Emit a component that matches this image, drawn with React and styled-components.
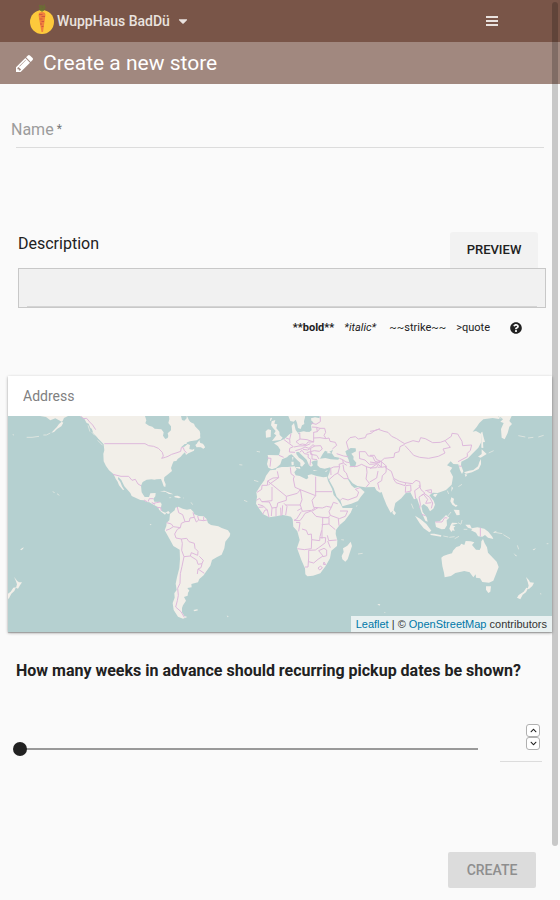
import React, { useState } from 'react';
import styled, { createGlobalStyle } from 'styled-components';
import { FaCaretDown, FaQuestionCircle, FaChevronUp, FaChevronDown } from 'react-icons/fa';

const GlobalStyle = createGlobalStyle`
  *, *::before, *::after { box-sizing: border-box; }
  body {
    margin: 0;
    background: #fafafa;
    color: #212121;
    font: 400 16px/24px Roboto, sans-serif;
  }
  button, input, textarea { font: inherit; color: inherit; }
`;

const TopBar = styled.header`
  display: flex;
  align-items: center;
  justify-content: space-between;
  height: 42px;
  padding: 0 62px 0 30px;
  background: #795548;
  color: #e9e2df;
`;

const BarButton = styled.button`
  display: flex;
  align-items: center;
  padding: 0;
  border: 0;
  background: none;
  font-size: 14px;
  font-weight: 500;
  line-height: 20px;
  cursor: pointer;
`;

const GroupName = styled.span`
  margin: 0 6px 0 3px;
`;

const Logo = styled.svg`
  display: block;
  width: 24px;
  height: 34px;
`;

const TitleBar = styled.div`
  display: flex;
  align-items: center;
  gap: 10px;
  height: 42px;
  padding: 0 16px;
  background: #a1887f;
  color: #fff;
`;

const Title = styled.h1`
  margin: 0;
  font-size: 21px;
  font-weight: 400;
  line-height: 24px;
`;

const Form = styled.form`
  display: flex;
  flex-direction: column;
  padding: 34px 8px 12px;
`;

const NameField = styled.div`
  display: grid;
  margin-bottom: 84px;
`;

const NameLabel = styled.label`
  grid-area: 1 / 1;
  padding: 0 3px;
  color: #9c9c9c;
  pointer-events: none;

  sup {
    margin-left: 3px;
    color: #777;
    font-size: 12px;
    line-height: 12px;
    vertical-align: 2px;
  }
`;

const NameInput = styled.input`
  grid-area: 1 / 1;
  height: 30px;
  margin: 0 8px;
  padding: 0;
  border: 0;
  border-bottom: 1px solid #dcdcdc;
  background: none;
  outline: none;
`;

const DescriptionField = styled.div`
  margin: 0 6px 32px 10px;
`;

const DescriptionHead = styled.div`
  display: flex;
  justify-content: space-between;
  padding-right: 8px;
`;

const PreviewButton = styled.button`
  height: 36px;
  width: 88px;
  padding: 0;
  border: 0;
  border-radius: 3px 3px 0 0;
  background: #f2f2f2;
  font-size: 13px;
  font-weight: 500;
  cursor: pointer;
`;

const EditorBox = styled.div`
  height: 40px;
  padding: 0 8px;
  border: 1px solid #c8c8c8;
  background: #f1f1f1;
`;

const Editor = styled.textarea`
  display: block;
  width: 100%;
  height: 38px;
  padding: 8px 0;
  border: 0;
  border-bottom: 1px solid #d4d4d4;
  background: none;
  outline: none;
  resize: none;
`;

const Hints = styled.div`
  display: flex;
  justify-content: flex-end;
  align-items: center;
  gap: 10px;
  height: 32px;
  margin-top: 4px;
  padding-right: 24px;
  font-size: 11px;
  line-height: 16px;

  i { min-width: 35px; }
`;

const HelpLink = styled.a`
  display: flex;
  margin-left: 10px;
  color: #212121;
`;

const AddressCard = styled.section`
  background: #fff;
  box-shadow: 0 1px 3px rgba(0, 0, 0, 0.3), 0 1px 1px rgba(0, 0, 0, 0.2);
`;

const AddressInput = styled.input`
  display: block;
  width: 100%;
  height: 40px;
  padding: 0 15px;
  border: 0;
  background: none;
  font-size: 14px;
  outline: none;

  &::placeholder { color: #808080; opacity: 1; }
`;

const MapFrame = styled.div`
  position: relative;
  background: #b5d0d0;
`;

const MapArt = styled.svg`
  display: block;
  width: 100%;
  height: 216px;

  .land { fill: #f2efe9; }
  .isles { fill: none; stroke: #dce4df; stroke-width: 3; }
  .sea { fill: #b5d0d0; }
  .border { fill: none; stroke: #deb9dc; stroke-width: 3; stroke-linejoin: round; }
`;

const Attribution = styled.div`
  position: absolute;
  right: 0;
  bottom: 0;
  padding: 0 5px;
  background: rgba(255, 255, 255, 0.7);
  color: #333;
  font: 11px/16px "Liberation Sans", Arial, sans-serif;

  a { color: #0078a8; text-decoration: none; }
`;

const WeeksField = styled.fieldset`
  min-width: 0;
  margin: 27px 0 90px;
  padding: 0;
  border: 0;
`;

const WeeksLegend = styled.legend`
  padding: 0 8px;
  font-weight: 700;
`;

const WeeksRow = styled.div`
  display: flex;
  justify-content: space-between;
  align-items: flex-start;
  gap: 15px;
  padding: 39px 10px 0 5px;
`;

const Slider = styled.input`
  flex: 1;
  min-width: 0;
  height: 14px;
  margin: 20px 0 0;
  appearance: none;
  background: linear-gradient(#999, #999) 7px center / calc(100% - 14px) 2px no-repeat;

  &::-webkit-slider-thumb {
    appearance: none;
    width: 14px;
    height: 14px;
    border-radius: 50%;
    background: #212121;
  }
`;

const NumberBox = styled.div`
  display: flex;
  width: 42px;
  height: 40px;
  padding-right: 2px;
  border-bottom: 1px solid #dcdcdc;
`;

const NumberInput = styled.input`
  flex: 1;
  min-width: 0;
  height: 32px;
  padding: 0;
  border: 0;
  background: none;
  outline: none;
`;

const Stepper = styled.div`
  display: flex;
  flex-direction: column;
  margin-top: 2px;
`;

const StepButton = styled.button`
  display: flex;
  align-items: center;
  justify-content: center;
  width: 14px;
  height: 13px;
  padding: 0;
  border: 1px solid #b0b0b0;
  border-radius: 3px;
  background: #fff;
`;

const CreateButton = styled.button`
  align-self: flex-end;
  width: 88px;
  height: 36px;
  margin-right: 16px;
  padding: 0;
  border: 0;
  border-radius: 2px;
  background: #dcdcdc;
  color: #8e8e8e;
  font-size: 14px;
  font-weight: 500;
`;

const ScrollThumb = styled.div`
  position: fixed;
  top: 2px;
  right: 2px;
  width: 6px;
  height: calc(100vh - 56px);
  border-radius: 3px;
  background: rgba(0, 0, 0, 0.2);
  pointer-events: none;
`;

function CarrotLogo() {
  return (
    <Logo viewBox="0 0 24 34" aria-hidden="true">
      <circle cx="12" cy="18" r="12" fill="#fdc93c" />
      <path d="M12 8V1M11.500 7L9.500 1M12.500 7L14.500 0.500M11 7L9 4M13 7L15.500 3.500M9 2h3M12.500 3h3M10 5h4" stroke="#66752f" strokeWidth="0.9" fill="none" />
      <path d="M9 9q3-2 6 0q1 2 0 5l-2 14h-1.500L9 14q-1-3 0-5Z" fill="#f0803c" />
      <path d="M9 10.500h3.500M11.500 12.500h3.500M9.500 15h3M11.500 17.500h2.500M10 20h2M11.500 22.500h2" stroke="#cc5340" strokeWidth="0.9" />
    </Logo>
  );
}

function PencilIcon() {
  return (
    <svg width="17" height="17" viewBox="128 149 1515 1515" fill="currentColor" aria-hidden="true">
      <path d="M491 1536l91-91-235-235-91 91v107h128v128h107zm523-928q0-22-22-22-10 0-17 7l-542 542q-7 7-7 17 0 22 22 22 10 0 17-7l542-542q7-7 7-17zm-54-192l416 416-832 832h-416v-416zm683 96q0 53-37 90l-166 166-416-416 166-165q36-38 90-38 53 0 91 38l235 234q37 39 37 91z" />
    </svg>
  );
}

function MenuIcon() {
  return (
    <svg width="12" height="10" viewBox="0 0 12 10" fill="currentColor" aria-hidden="true">
      <path d="M0 0h12v2H0zM0 4h12v2H0zM0 8h12v2H0z" />
    </svg>
  );
}

function WorldMap() {
  return (
    <MapArt viewBox="0 0 1632 648" preserveAspectRatio="xMidYMid slice" role="img" aria-label="World map">
      <g transform="translate(-24 -153)">
        <path className="land" d="M120 153L138 156L151 166L166 160L181 168L190 173L184 184L171 192L162 201L154 203L170 187L177 177L188 168L192 159L204 153L240 153L252 160L260 174L266 176L271 188L278 193L282 205L291 211L294 220L304 229L316 237L560 237L560 153Z" />
        <path className="isles" d="M151 204L139 210L130 210M117 214L96 217L80 217M42 210L38 209M264 181L270 200M275 201L284 211M293 226L308 241M158 380L164 383M171 386L178 391" />
      </g>
      <g transform="translate(246 -18)">
        <path className="land" d="M0 18H291L297 31L304 40L305 48L300 54L312 59L318 67L330 71L331 84L320 91L300 94L288 98L280 106L273 112L283 110L293 102L300 105L298 117L307 119L313 116L312 122L295 130L288 135L285 127L279 132L272 140L263 147L259 153L251 154L247 163L243 174L246 183L236 191L223 202L222 211L227 223L226 231L221 229L217 217L213 207L200 208L193 209L185 208L170 209L158 216L153 227L155 247L164 261L177 261L181 250L197 249L196 259L190 266L193 275L210 276L215 282L212 296L216 304L226 308L235 303L240 309L234 312L229 308L225 314L214 306L207 299L205 292L188 283L178 277L170 276L161 271L151 270L125 258L121 249L113 240L103 229L94 210L85 201L84 207L91 216L96 229L103 240L98 239L87 226L83 215L77 206L71 193L57 181L48 168L41 154L40 131L43 121L41 103L30 91L10 70L0 40Z" />
        <path className="land" d="M322 98L329 89L328 98L339 101L344 111L340 117L333 111L319 112ZM210 244L223 242L239 248L250 253L237 252L227 246ZM253 258L263 257L273 262L267 265L254 262ZM238 262L245 263L239 265ZM279 263L284 264L279 265Z" />
        <path className="sea" d="M165 18L169 31L166 40L177 47L187 50L194 56L214 58L221 67L219 77L226 87L233 84L235 78L233 70L243 61L243 49L235 39L238 27L237 18ZM273 18L276 30L283 32L290 25V18Z" />
        <path className="border" d="M-28 18L-20 26L-10 25L-1 36L8 45L17 59M43 101H165L176 107L191 109L205 115L217 127L220 138L215 145L226 142L234 139L245 133L261 128L272 124L274 113L280 113L283 122L290 128" />
        <path className="border" d="M69 193L93 199H116L126 211L136 208L144 222L153 227M174 275L178 266H190M188 281L199 278L210 276M201 292L212 293" />
      </g>
      <g transform="translate(-24 252)">
        <path className="land" d="M494 91L499 78L500 68L508 61L510 42L524 31L526 23L535 20L548 26L561 29L572 27L580 35L583 43L596 48L611 49L620 57L624 69L633 75L655 79L665 84L684 91L691 101L689 109L676 125L673 145L665 164L650 172L636 180L631 197L617 217L611 226L598 237L594 247L574 252L575 262L562 264L568 272L564 278L563 287L552 291L558 302L549 316L546 324L546 337L553 348L562 351L549 356L534 350L521 330L518 309L524 293L523 280L530 270L527 251L531 232L538 204L540 177L539 149L520 138L512 123L502 105Z" />
        <path className="land" d="M42 230L51 242L57 247H66L60 256L54 266L48 263L51 253L48 244ZM40 263L48 262L43 273L34 281L27 295L24 297V281L32 275Z" />
        <path className="land" d="M580 330L592 328L594 331L584 334ZM680 346L686 350L683 352ZM61 148L71 142L69 147L63 151ZM449 73L454 72L453 76Z" />
        <path className="border" d="M532 21L536 38L548 44L555 65L544 70L541 83L532 88L524 102L528 114L544 117L547 130L545 151L552 170L546 199L541 221L540 250L533 265L535 286L532 302L527 321L543 335L553 352M555 65L568 64L570 54L583 52L579 37M583 52L589 66L596 60L593 48M596 60L611 62L611 50M611 62L621 60M500 68L514 72L520 80L509 87L498 91M520 80L541 83M544 117L560 115L567 125L583 130L585 145L594 154L593 166L574 158L571 168L552 170M571 168L590 180L594 193L606 191L610 181L598 169M606 191L603 203L594 207L592 222M594 207L613 220M432 0L441 5M455 7L465 13M482 22L484 33" />
      </g>
      <g transform="translate(546 -33)">
        <path className="land" d="M295 33L301 48L311 50L317 44L321 53L324 69L332 72L336 61L343 57L342 49L346 33H374L363 38L364 47L371 54L363 60L365 76L358 81L340 79L323 83L317 75L312 54L305 62L307 83L298 88L284 101L270 108L252 115L264 124L271 135L267 151L233 150L235 160L231 177L235 188L246 193L259 188L271 178L276 163L291 157L297 151L305 148L315 158L324 167L331 173L331 182L336 185L345 175L338 166L327 158L319 147V141L326 141L339 154L350 164L357 181L363 185L369 181L364 171L372 167L383 166L382 181L390 188L404 191L421 187L419 202L413 216L419 228L431 250L440 275L451 286L457 304L484 296L504 288L512 276L524 261L513 251L505 246L493 249L484 241L472 220L478 223L488 235L502 243L525 247L554 246L559 256L570 263L575 261L580 276L590 301L602 323L611 316L616 294L634 280L648 263L661 262L672 283L681 280L688 301L694 321L706 347L713 350L710 337L698 321L694 303L701 297L713 306L720 319L730 311L735 299L731 287L718 271L729 263L743 264L768 255L785 239L789 215L780 198L787 188L771 181L782 169L790 177L805 178L810 196L816 207L820 199L813 181L814 170L834 160L847 146L865 128L874 111V87L858 78L848 80L860 66L868 54L880 43L908 39L927 42L933 33Z" />
        <path className="land" d="M260 190L275 186H293L314 184L320 193L313 202L317 211L329 213L349 223L355 219L353 211L364 208L380 213L400 217L411 215L414 228L426 251L431 270L443 284L453 299L458 309H488L482 323L464 347L449 360L438 375L437 387L442 406L441 423L424 437L420 460L407 483L391 505L369 512L352 514L346 508L345 490L334 465L321 429L329 405L322 379L310 365L308 343L303 335L291 332L278 330L262 333L238 337L220 328L208 312L198 296L201 275L199 262L211 242L223 226L228 212L240 196L257 194Z" />
        <path className="land" d="M482 410L486 423L481 438L473 463L466 470L457 463L455 453L461 441L459 430L472 422ZM246 108L272 105L278 98L269 90L268 80L259 70L262 58L253 56L256 45L245 49L243 61L249 69L257 78L252 86L259 91ZM228 98L242 96L243 75L234 73L227 79ZM317 186H330L331 192L317 188ZM304 170H311V180L305 181ZM306 157L310 156L309 168ZM370 195L383 196L371 198ZM405 199L414 195L408 201ZM241 40L246 38L244 45L240 49Z" />
        <path className="land" d="M0 51L12 56L15 64L29 78L31 88L24 95L9 102L0 101ZM16 120L29 109L32 117L42 120L45 129L32 127L19 125Z" />
        <path className="sea" d="M390 161L398 147L405 137L413 140L411 145L425 144L433 155L448 158L445 164L422 163L406 159ZM418 140L429 134L425 145ZM466 139L482 129L497 130L498 139L484 146L491 155L490 163L499 173L495 187L481 184L476 164L471 154ZM347 33L344 52L349 66L337 75L350 80L361 76L361 61L370 52L361 46L363 40L375 37L389 40V33ZM300 72H303L302 81ZM324 83L332 86L325 88Z" />
        <path className="isles" d="M148 179L157 180M192 226L205 230M162 286L172 290M504 447L518 445M454 404L462 405M498 304L502 302M3 292L8 299M200 139L210 141" />
        <path className="border" d="M232 159L243 160L240 185M267 151L281 157M281 103L298 116L310 125L299 130L298 141L315 142M288 99L299 103L303 86M299 103L300 115M329 83L330 102L318 110L329 119L337 117L348 119L354 111L371 111L371 81M330 102L351 104L371 111M312 126L327 123L348 122L361 116M316 137L333 132L345 126L357 130L369 119L374 123L362 130L353 135L339 133M329 142L336 136L343 146L355 148L354 157L362 163L360 181M350 143L361 140L366 147L366 162L381 164M361 140L373 137L388 139L397 132L392 122L373 123M362 130L362 148L380 151L387 162M371 82L382 80L390 70H404L407 82L402 91L408 101L417 99L420 109L436 112L440 121L427 132M371 99L390 98L408 101M364 54L378 58L391 50V34M366 66L380 67L390 70M380 67L382 80M440 146L461 153L475 155M448 160L458 164L460 174L447 178L449 185L431 186L420 191M458 164L468 171L479 173M460 174L470 181M479 185L501 184L515 178L529 185L531 202L528 222L538 235L529 246M476 136L469 111L480 98L496 95L505 102L526 98L530 88L543 85L554 77L570 71M509 162L508 140L526 140L535 153L548 154L555 169L570 173M510 161L525 165L538 178L555 177L570 169M528 185L543 189L559 188L566 176M564 198L560 219L539 231M449 185L444 204L434 209L417 224M459 179L462 198L469 204L475 221M443 205L462 221H475M422 190L423 210M450 287L457 280L474 285L501 275M501 275L506 261L496 253L510 248M262 199L266 218L249 219L233 228L232 241H216L215 253L201 262M233 228L289 274V286L263 294L261 307L246 309L238 291L215 290L209 280L199 286M246 246V287L216 290M266 218L235 240M301 187L303 206L313 214L310 222L315 247L331 254L377 272L377 215M376 260H426M289 274L322 265L331 254L336 284L330 300L287 300M377 272L366 286L371 307L384 308L397 309L410 304L424 307L430 292L443 296M331 300L337 319L365 316L376 308M322 317L336 309M334 320L320 342L312 346L330 347L339 335L345 325L363 318M384 308L365 319L378 334L396 337L414 338L421 331M398 338V357L396 372L396 401M396 338H417V357L395 359M424 307L417 320L421 331L448 341L466 334L473 318L450 318M445 342L447 362M417 358L436 374M336 372L349 376L354 389L364 387L365 404L389 407L390 395L395 376M318 352L330 353L326 379M365 404L364 431L343 434L322 431M390 398L407 398L406 413L393 423L386 428M412 391L416 407L440 405M413 408L421 428M386 428L376 435L356 436V459L354 486L345 486M356 470L371 474L384 463L399 453L386 437L402 430L410 435V452L399 455M402 471L407 479L400 478ZM392 483L397 489L389 495L384 489ZM204 298L220 303L232 315L237 337M218 328L225 315L232 315M205 307L221 306M246 309L244 333M258 309V334M272 308L273 333M278 301L276 330M282 295L291 304L287 330" />
      </g>
      <g transform="translate(1086 -33)">
        <path className="land" d="M425 33L418 48L426 57L418 65L413 84L404 103L395 98L393 72L401 54L391 50L399 43L388 33ZM337 80L340 94L345 111L339 112L340 129L334 128V103L333 83ZM335 133L350 147L344 151L332 158L324 155L335 147ZM333 162L333 178L326 192L306 202L288 206L282 202L297 197L310 195L324 184L328 171ZM284 207L292 209L287 216ZM245 244L249 249L244 260ZM192 267L203 266L196 277L189 271ZM70 314L78 324L73 331L67 324ZM244 277L252 281L250 292L256 299L263 300L258 306L247 299L241 289ZM251 314L268 315L269 330L260 331ZM195 350L209 349L219 340L228 330L238 338L230 346L231 361L224 372L215 373L198 366ZM135 332L151 342L169 357L184 377L178 382L161 370L149 355ZM181 386L193 386L214 391L213 395L182 390ZM241 362L246 353L264 354L259 357L246 360L256 364L251 368L254 378L248 376L244 381L238 371ZM286 359L300 359L305 370L322 367L343 371L355 380L367 395L370 402L354 398L345 390L337 395L324 394L318 383L303 376L307 372L294 368ZM369 382L381 377L374 384Z" />
        <path className="land" d="M214 458L220 453L235 448L246 445L249 437L259 426L269 423L274 416L283 420L287 408L302 409L313 412L306 420L318 434L329 435L333 427L334 409L339 402L344 415L351 427L354 443L367 457L380 470L386 486L380 502L370 527L357 533L337 531L330 520L318 518L317 508L310 517L299 502L283 498L256 504L243 513L224 517L222 503L217 483ZM348 544H363L361 560L355 564L348 554ZM468 516L477 526L480 532L492 533L487 543L476 553L473 550L476 542L473 530ZM469 548L474 550L468 562L458 569L451 583L441 578L446 570L461 560ZM22 597L31 598L28 602ZM488 434L498 429L492 436ZM430 444L441 453L438 454ZM375 33H393L387 39L376 38Z" />
        <path className="isles" d="M356 144L371 137M384 34L394 41M445 92L466 96M474 99L490 97M505 96L521 91M265 245L276 238M220 393L235 396M238 397L254 395M254 401L267 394M232 335L243 321M264 353L273 358M276 345L273 357M281 373H292M374 382L397 386M400 389L420 401M530 416L535 416M510 566L514 567M43 621L46 624M124 296L130 311M232 257L236 267M442 421L446 433" />
        <path className="border" d="M0 79L13 77L25 73L42 79L54 82L65 94L80 101L92 109L104 116L129 107L147 111L152 98L166 101L188 113L211 112L225 107L241 127L219 132L225 144L205 154L176 160L149 157L131 151L119 137L105 122M225 107L244 94L246 85L263 87L276 109L278 122L305 120L301 136L292 145V155L264 170M267 183L275 184M104 118L90 125L87 140L74 144L72 157L43 160L33 169L20 164L13 151L0 151M0 171L20 174L33 169L50 184L35 187L22 176L0 191M34 169V186L23 187M49 185L48 202L37 212L35 227L23 234L28 254M45 187L64 199L71 220L88 229L105 233L127 236L138 226L149 230L151 245L134 257L137 281M70 221L78 233L105 242L107 234M107 242L122 240L123 258L106 262L107 244M147 240L153 254L165 265L147 276L151 297L149 309M166 257L184 254L185 265L172 259M162 265L179 277L188 294L184 310M154 271L160 267L173 283L167 295L184 293M196 351L216 351L224 338L232 339M331 368V394M155 328L166 332" />
      </g>
    </MapArt>
  );
}

export default function App() {
  const [weeks, setWeeks] = useState('');
  const step = (delta) => setWeeks(String(Math.max(1, Number(weeks) + delta)));

  return (
    <>
      <GlobalStyle />
      <TopBar>
        <BarButton type="button">
          <CarrotLogo />
          <GroupName>WuppHaus BadDü</GroupName>
          <FaCaretDown size={14} />
        </BarButton>
        <BarButton type="button" aria-label="Menu"><MenuIcon /></BarButton>
      </TopBar>
      <TitleBar>
        <PencilIcon />
        <Title>Create a new store</Title>
      </TitleBar>
      <Form onSubmit={(e) => e.preventDefault()}>
        <NameField>
          <NameLabel htmlFor="name">Name<sup>*</sup></NameLabel>
          <NameInput id="name" />
        </NameField>
        <DescriptionField>
          <DescriptionHead>
            <label htmlFor="description">Description</label>
            <PreviewButton type="button">PREVIEW</PreviewButton>
          </DescriptionHead>
          <EditorBox><Editor id="description" rows={1} /></EditorBox>
          <Hints>
            <b>**bold**</b>
            <i>*italic*</i>
            <span>~~strike~~</span>
            <span>&gt;quote</span>
            <HelpLink href="#formatting" aria-label="Formatting help"><FaQuestionCircle size={12} /></HelpLink>
          </Hints>
        </DescriptionField>
        <AddressCard>
          <AddressInput aria-label="Address" placeholder="Address" />
          <MapFrame>
            <WorldMap />
            <Attribution>
              <a href="#leaflet">Leaflet</a> | © <a href="#osm">OpenStreetMap</a> contributors
            </Attribution>
          </MapFrame>
        </AddressCard>
        <WeeksField>
          <WeeksLegend>How many weeks in advance should recurring pickup dates be shown?</WeeksLegend>
          <WeeksRow>
            <Slider type="range" min="1" max="20" value={weeks || 1} onChange={(e) => setWeeks(e.target.value)} aria-label="Weeks" />
            <NumberBox>
              <NumberInput inputMode="numeric" value={weeks} onChange={(e) => setWeeks(e.target.value)} aria-label="Number of weeks" />
              <Stepper>
                <StepButton type="button" aria-label="More weeks" onClick={() => step(1)}><FaChevronUp size={7} /></StepButton>
                <StepButton type="button" aria-label="Fewer weeks" onClick={() => step(-1)}><FaChevronDown size={7} /></StepButton>
              </Stepper>
            </NumberBox>
          </WeeksRow>
        </WeeksField>
        <CreateButton type="submit" disabled>CREATE</CreateButton>
      </Form>
      <ScrollThumb />
    </>
  );
}
